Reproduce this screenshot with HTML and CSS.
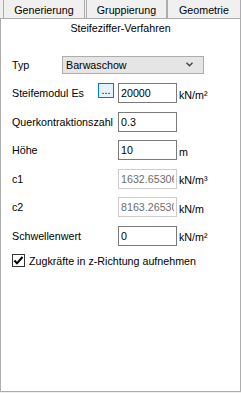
FILE: index.html
```html
<!doctype html>
<html>
<head>
<meta charset="utf-8">
<title>Steifeziffer-Verfahren</title>
<link rel="stylesheet" href="styles.css">
</head>
<body>
<!--Reiter-->
<div class="tabs">
	<div class="tab tab-gen">Generierung</div>
	<div class="tab tab-grp">Gruppierung</div>
	<div class="tab tab-geo">Geometrie</div>
</div>
<div class="active-tab">Steifeziffer-Verfahren</div>

<!--Formular-->
<div class="panel">
	<div class="form">
		<div class="label typ">Typ</div>
		<div class="combo">
			<span>Barwaschow</span>
			<svg width="7" height="5" viewBox="0 0 7 5"><path d="M0.5 0.8 L3.5 3.8 L6.5 0.8" fill="none" stroke="#444" stroke-width="1.4"/></svg>
		</div>

		<div class="label short">Steifemodul Es</div>
		<div class="dots">...</div>
		<input class="field" type="text" value="20000">
		<div class="unit">kN/m²</div>

		<div class="label">Querkontraktionszahl</div>
		<input class="field" type="text" value="0.3">
		<div class="unit"></div>

		<div class="label">Höhe</div>
		<input class="field" type="text" value="10">
		<div class="unit">m</div>

		<div class="label">c1</div>
		<input class="field" type="text" value="1632.65306122449" disabled>
		<div class="unit">kN/m³</div>

		<div class="label">c2</div>
		<input class="field" type="text" value="8163.26530612245" disabled>
		<div class="unit">kN/m</div>

		<div class="label">Schwellenwert</div>
		<input class="field" type="text" value="0">
		<div class="unit">kN/m²</div>

		<div class="check-row">
			<span class="box"><svg width="11" height="11" viewBox="0 0 11 11"><path d="M1.5 5.5 L4 8.3 L9.5 2" fill="none" stroke="#000" stroke-width="2"/></svg></span>
			<span>Zugkräfte in z-Richtung aufnehmen</span>
		</div>
	</div>
</div>
</body>
</html>
```
FILE: styles.css
```css
body {
	margin: 0;
	background: #f0f0f0;
	font-family: "Liberation Sans", Arial, sans-serif;
	font-size: 10.7px;
	color: #000;
}

/* Reiter */
.tabs {
	display: flex;
	height: 18px;
}
.tab {
	box-sizing: border-box;
	height: 18px;
	line-height: 20px;
	text-align: center;
	background: #f0f0f0;
	border-left: 1px solid #adadad;
	border-right: 1px solid #adadad;
}
.tab-gen {
	margin-left: 3px;
	width: 82px;
}
.tab-grp {
	margin-left: 1px;
	width: 81px;
}
.tab-geo {
	width: 74px;
}
.active-tab {
	box-sizing: border-box;
	width: 241px;
	height: 20px;
	line-height: 19px;
	text-align: center;
	background: #fff;
	border: 1px solid #adadad;
	border-bottom: none;
}

/* Panel */
.panel {
	box-sizing: border-box;
	width: 241px;
	height: 354px;
	background: #fff;
	border: 1px solid #adadad;
	border-top: none;
	padding: 16.5px 0 0 11px;
}
.form {
	display: grid;
	grid-template-columns: 50px 36px 20px 59px auto;
	grid-auto-rows: 20px;
	row-gap: 8.5px;
}
.label {
	grid-column: 1 / 4;
	align-self: center;
}
.label.short {
	grid-column: 1 / 3;
}
.label.typ {
	grid-column: 1 / 2;
}
.combo {
	grid-column: 2 / 6;
	align-self: center;
	box-sizing: border-box;
	width: 142px;
	height: 18px;
	background: #e5e5e5;
	border: 1px solid #adadad;
	display: flex;
	align-items: center;
	justify-content: space-between;
	padding: 0 10px 0 3px;
}
.dots {
	grid-column: 3;
	align-self: start;
	box-sizing: border-box;
	width: 16px;
	height: 15px;
	line-height: 13px;
	text-align: center;
	background: #e5f1fb;
	border: 1px solid #0078d7;
}
.field {
	grid-column: 4;
	box-sizing: border-box;
	width: 59px;
	height: 20px;
	margin: 0;
	padding: 0 2px;
	border: 1px solid #7a7a7a;
	background: #fff;
	font: inherit;
	color: #000;
	outline: none;
}
.field:disabled {
	border-color: #cccccc;
	color: #6d6d6d;
	background: #fff;
}
.unit {
	grid-column: 5;
	align-self: center;
	padding: 3px 0 0 2px;
}
.check-row {
	grid-column: 1 / -1;
	align-self: start;
	display: flex;
	align-items: center;
	gap: 4px;
	height: 13px;
}
.box {
	box-sizing: border-box;
	width: 13px;
	height: 13px;
	border: 1px solid #333;
	background: #fff;
	display: flex;
	align-items: center;
	justify-content: center;
}
```
